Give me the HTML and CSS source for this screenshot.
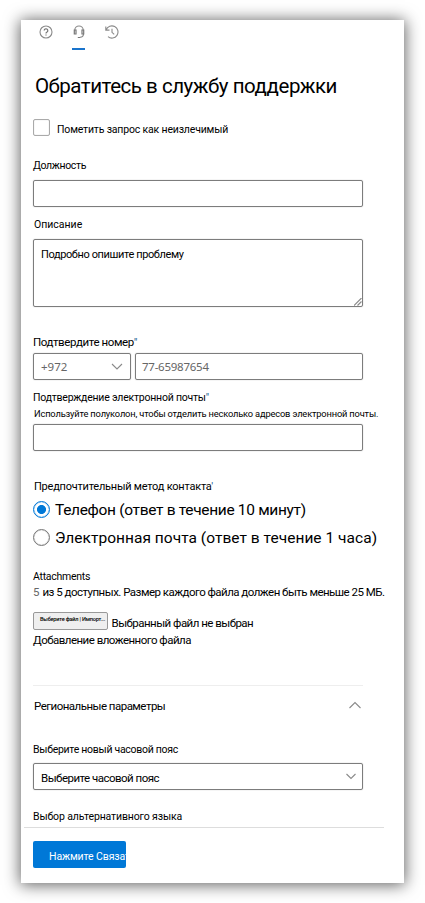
FILE: index.html
```html
<!DOCTYPE html>
<html lang="ru">
<head>
<meta charset="utf-8">
<title>Обратитесь в службу поддержки</title>
<link rel="stylesheet" href="styles.css">
</head>
<body>
<main class="panel">
  <nav class="tabs">
    <span class="tab">
      <svg width="14" height="14" viewBox="0 0 14 14"><circle cx="7" cy="7" r="6"/><path class="strong" d="M5.200 5.600a1.800 1.800 0 1 1 2.800 1.500c-.7.4-1 .7-1 1.300M7 9.500v1.100"/></svg>
    </span>
    <span class="tab tab-active">
      <svg width="14" height="14" viewBox="0 0 14 14"><path d="M2.800 5.200a4.200 4.200 0 0 1 8.400 0M11.500 9c0 2-1 3-3.500 3.300"/><path class="strong" d="M4 5H2.300v4H4zM10 5h1.700v4H10zM5.800 12.500h2.400"/></svg>
    </span>
    <span class="tab">
      <svg width="14" height="14" viewBox="0 0 14 14"><path d="M1.200 4.800A6.100 6.100 0 1 1 3 11.700M.8 1.500v3.600h3.700M7 3.800v3.500l2.200 2"/></svg>
    </span>
  </nav>
  <h1 class="title">Обратитесь в службу поддержки</h1>
  <label class="check"><span class="box"></span><span class="small">Пометить запрос как неизлечимый</span></label>

  <div class="label label-job">Должность</div>
  <div class="field"></div>
  <div class="label label-desc">Описание</div>
  <div class="field area">Подробно опишите проблему
    <svg class="grip" width="8" height="8" viewBox="0 0 8 8"><path d="M0 7.500 7.500 0M3.500 7.500l4-4"/></svg>
  </div>

  <div class="label label-phone">Подтвердите номер<span class="star">"</span></div>
  <div class="phone">
    <div class="field code">+972
      <svg width="12" height="7" viewBox="0 0 12 7"><path d="M1 1l5 5 5-5"/></svg>
    </div>
    <div class="field number">77-65987654</div>
  </div>
  <div class="label label-mail">Подтверждение электронной почты<span class="star">"</span></div>
  <div class="hint">Используйте полуколон, чтобы отделить несколько адресов электронной почты.</div>
  <div class="field field-mail"></div>

  <div class="label label-method">Предпочтительный метод контакта<span class="star">'</span></div>
  <label class="radio radio-phone"><span class="dot dot-on"></span>Телефон (ответ в течение 10 минут)</label>
  <label class="radio radio-mail"><span class="dot"></span>Электронная почта (ответ в течение 1 часа)</label>

  <div class="label label-files">Attachments</div>
  <div class="text count"><span class="left">5</span>из 5 доступных. Размер каждого файла должен быть меньше 25 МБ.</div>
  <div class="file"><span class="pick">Выберите файл | Импорт...</span><span class="text">Выбранный файл не выбран</span></div>
  <div class="text add">Добавление вложенного файла</div>

  <section class="region">
    <div class="region-head text">Региональные параметры
      <svg width="14" height="8" viewBox="0 0 14 8"><path d="M1.500 7l5.500-5.500L12.500 7"/></svg>
    </div>
    <div class="label label-zone">Выберите новый часовой пояс</div>
    <div class="field zone text">Выберите часовой пояс
      <svg width="12" height="7" viewBox="0 0 12 7"><path d="M1.500 1L6 5.500 10.500 1"/></svg>
    </div>
    <div class="label label-lang">Выбор альтернативного языка</div>
  </section>
  <footer class="foot"><button class="send">Нажмите Связат</button></footer>
</main>
</body>
</html>
```
FILE: styles.css
```css
* { box-sizing: border-box; }
body { margin: 0; padding: 20px 21px; height: 903px; overflow: hidden; background: #fff; font-family: Roboto, sans-serif; color: #000; }
svg { display: block; flex: none; fill: none; stroke: #8a8a8a; stroke-width: 1.1; }
.strong { stroke: #777; stroke-width: 1.2; }

.panel { width: 383px; height: 863px; padding-left: 12px; background: #fff; box-shadow: 0 1px 15px 1px rgba(0, 0, 0, .62); }

.tabs { display: flex; gap: 20px; height: 30px; padding-left: 6px; }
.tab { width: 13px; padding-top: 5px; border-bottom: 2px solid transparent; }
.tab svg { margin-left: -.5px; }
.tab-active { border-color: #1a74cc; }

.title { margin: 24px 0 0 2px; font-size: 20.5px; font-weight: 400; line-height: 24px; letter-spacing: -.48px; white-space: nowrap; }
.check { display: flex; align-items: center; gap: 7px; height: 17px; margin-top: 21px; }
.box { width: 17px; height: 17px; border: 1px solid #aaa; border-radius: 2px; box-shadow: inset 0 0 1px #bbb; }
.small { padding-top: 4px; font-size: 10.5px; letter-spacing: -.174px; }

.label { height: 16px; line-height: 18px; font-size: 10.5px; white-space: nowrap; }
.label-job { margin-top: 21px; letter-spacing: -.36px; }
.label-desc { margin: 9px 0 0 1px; }
.label-phone { margin-top: 27px; font-size: 11.5px; line-height: 16px; letter-spacing: -.4px; }
.label-mail { margin-top: 9px; letter-spacing: -.22px; }
.label-method { margin: 27px 0 0 1px; font-size: 11px; letter-spacing: -.23px; }
.label-files { margin-top: 22px; letter-spacing: -.27px; }
.label-zone { margin-top: 27px; letter-spacing: -.28px; }
.label-lang { margin-top: 18px; letter-spacing: -.13px; }
.star { color: #1d5c92; }
.hint { height: 17px; margin-left: 1px; font-size: 9.3px; line-height: 17px; letter-spacing: -.165px; white-space: nowrap; }

.field { width: 330px; height: 27px; margin-top: 7px; border: 1px solid #7c7c7c; border-radius: 2px; box-shadow: 0 0 1px #999; }
.area { position: relative; height: 68px; padding: 7px; font-size: 11px; line-height: 16px; letter-spacing: -.39px; }
.grip { position: absolute; right: 0; bottom: 0; }
.phone { display: flex; gap: 4px; margin-top: 3px; }
.code, .number { height: 27px; margin: 0; padding: 0 7px; color: #666; font: 11.5px/25px "Noto Sans", sans-serif; }
.code { display: flex; align-items: center; justify-content: space-between; width: 98px; }
.number { width: 228px; padding-left: 6px; letter-spacing: -.25px; }
.field-mail { margin-top: 2px; }

.radio { display: flex; align-items: center; gap: 5px; height: 17px; font-size: 15.5px; white-space: nowrap; }
.radio-phone { margin-top: 7px; letter-spacing: -.32px; }
.radio-mail { margin-top: 11px; letter-spacing: .03px; }
.dot { flex: none; width: 17px; height: 17px; border: 1px solid #777; border-radius: 50%; box-shadow: inset 0 0 1px #888; }
.dot-on { border-color: #0078d7; background: radial-gradient(circle, #0078d7 4.100px, #fff 4.900px); box-shadow: inset 0 0 1px #0078d7; }

.text { font-size: 11.5px; line-height: 16px; letter-spacing: -.52px; white-space: nowrap; }
.left { display: inline-block; width: 9.500px; color: #666; }
.file { display: flex; gap: 3.500px; height: 18px; margin-top: 12px; }
.file .text { padding-top: 3px; }
.pick { width: 75px; height: 18px; padding-left: 6px; border: 1px solid #999; border-radius: 2px; background: #efefef; font-size: 5.600px; font-weight: 500; line-height: 13px; letter-spacing: -.2px; white-space: nowrap; }
.add { margin-top: 2px; }

.region { width: 330px; margin-top: 37px; border-top: 1px solid #eee; }
.region-head { display: flex; justify-content: space-between; align-items: center; height: 16px; margin: 12px 1px 0 1px; }
.region-head svg { margin-top: -3px; }
.zone { display: flex; justify-content: space-between; align-items: center; margin-top: 6px; padding: 2px 5px 0 7px; }
.zone svg { margin-top: -2px; }
.foot { width: 360px; margin: 3px 0 0 -9px; padding: 13px 0 0 9px; border-top: 1px solid #ddd; }
.send { display: block; width: 93px; height: 27px; padding: 3px 0 0 16px; overflow: hidden; border: 0; border-radius: 2px; background: #0078d7; color: #fff; font: 10.5px Roboto, sans-serif; letter-spacing: -.11px; text-align: left; white-space: nowrap; }
```
